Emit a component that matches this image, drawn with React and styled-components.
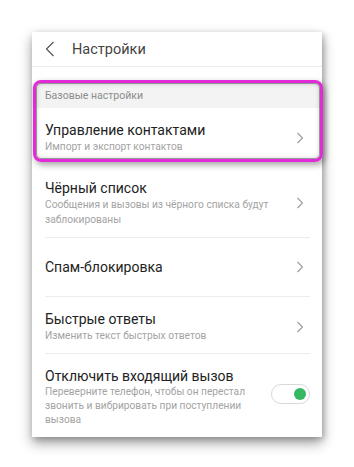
import React from 'react'
import styled, { createGlobalStyle } from 'styled-components'

const Global = createGlobalStyle`
  html, body {
    margin: 0;
    padding: 0;
    background: #fff;
  }
  body {
    font-family: Roboto, 'Noto Sans', sans-serif;
  }
`

const Page = styled.div`
  width: 354px;
  height: 467px;
  padding: 32px 0 0 32px;
  box-sizing: border-box;
  overflow: hidden;
`

const Card = styled.div`
  position: relative;
  width: 290px;
  background: #fff;
  box-shadow: 0 6px 12px rgba(0, 0, 0, 0.38), 2px 2px 6px rgba(0, 0, 0, 0.2);
`

const Header = styled.div`
  display: flex;
  align-items: center;
  height: 34px;
  padding-left: 13px;
  border-bottom: 1px solid #ececec;
`

const BackIcon = styled.svg`
  width: 10px;
  height: 16px;
  margin-right: 17px;
`

const Title = styled.div`
  font-size: 14.5px;
  color: #444;
`

const SectionLabel = styled.div`
  margin-top: 16px;
  height: 25px;
  display: flex;
  align-items: center;
  padding-left: 13px;
  background: #f3f3f3;
  font-size: 10.5px;
  color: #8c8c8c;
`

const List = styled.div`
  padding: 0 12px 0 13px;
`

const Row = styled.div`
  display: flex;
  align-items: center;
  min-height: ${p => p.$min || 0}px;
  padding: ${p => p.$pad || '13px 0 11px'};
  border-top: ${p => (p.$divider ? '1px solid #ececec' : 'none')};
  box-sizing: border-box;
`

const Texts = styled.div`
  flex: 1;
  padding-right: 20px;
`

const ItemTitle = styled.div`
  font-size: 14px;
  line-height: 18px;
  color: #222;
`

const ItemSub = styled.div`
  font-size: 10.2px;
  line-height: ${p => p.$lh || 15}px;
  color: #a3a3a3;
`

const Chevron = styled.svg`
  width: 8px;
  height: 12px;
  margin-right: 6px;
  flex-shrink: 0;
`

const Toggle = styled.div`
  position: relative;
  width: 37px;
  height: 18px;
  border: 1px solid #d8d8d8;
  border-radius: 10px;
  background: #fff;
  flex-shrink: 0;
  margin-top: -6px;
  &::after {
    content: '';
    position: absolute;
    right: 3px;
    top: 3px;
    width: 12px;
    height: 12px;
    border-radius: 50%;
    background: #35b862;
  }
`

const Highlight = styled.div`
  position: absolute;
  left: 1px;
  top: 48px;
  width: 290px;
  height: 82px;
  box-sizing: border-box;
  border: 3px solid #e22ad8;
  border-radius: 8px;
  box-shadow: inset 0 0 0 1px rgba(90, 90, 90, 0.55), inset 0 0 5px rgba(0, 0, 0, 0.25),
    2px 3px 6px rgba(0, 0, 0, 0.35);
  pointer-events: none;
`

const Arrow = () => (
  <Chevron viewBox="0 0 8 12">
    <path d="M1.5 1 L6.5 6 L1.5 11" fill="none" stroke="#9a9a9a" strokeWidth="1.1" />
  </Chevron>
)

export default function App() {
  return (
    <Page>
      <Global />
      <Card>
        <Header>
          <BackIcon viewBox="0 0 10 16">
            <path d="M8.5 1 L1.5 8 L8.5 15" fill="none" stroke="#555" strokeWidth="1.2" />
          </BackIcon>
          <Title>Настройки</Title>
        </Header>
        <SectionLabel>Базовые настройки</SectionLabel>
        <List>
          <Row>
            <Texts>
              <ItemTitle>Управление контактами</ItemTitle>
              <ItemSub>Импорт и экспорт контактов</ItemSub>
            </Texts>
            <Arrow />
          </Row>
          <Row $pad="14px 0 10px">
            <Texts>
              <ItemTitle>Чёрный список</ItemTitle>
              <ItemSub>Сообщения и вызовы из чёрного списка будут заблокированы</ItemSub>
            </Texts>
            <Arrow />
          </Row>
          <Row $divider $min={59} $pad="0">
            <Texts>
              <ItemTitle>Спам-блокировка</ItemTitle>
            </Texts>
            <Arrow />
          </Row>
          <Row $divider $pad="13px 0 10px">
            <Texts>
              <ItemTitle>Быстрые ответы</ItemTitle>
              <ItemSub>Изменить текст быстрых ответов</ItemSub>
            </Texts>
            <Arrow />
          </Row>
          <Row $divider $pad="13px 0 10px">
            <Texts>
              <ItemTitle>Отключить входящий вызов</ItemTitle>
              <ItemSub $lh={14}>
                Переверните телефон, чтобы он перестал звонить и вибрировать при поступлении
                вызова
              </ItemSub>
            </Texts>
            <Toggle />
          </Row>
        </List>
        <Highlight />
      </Card>
    </Page>
  )
}
